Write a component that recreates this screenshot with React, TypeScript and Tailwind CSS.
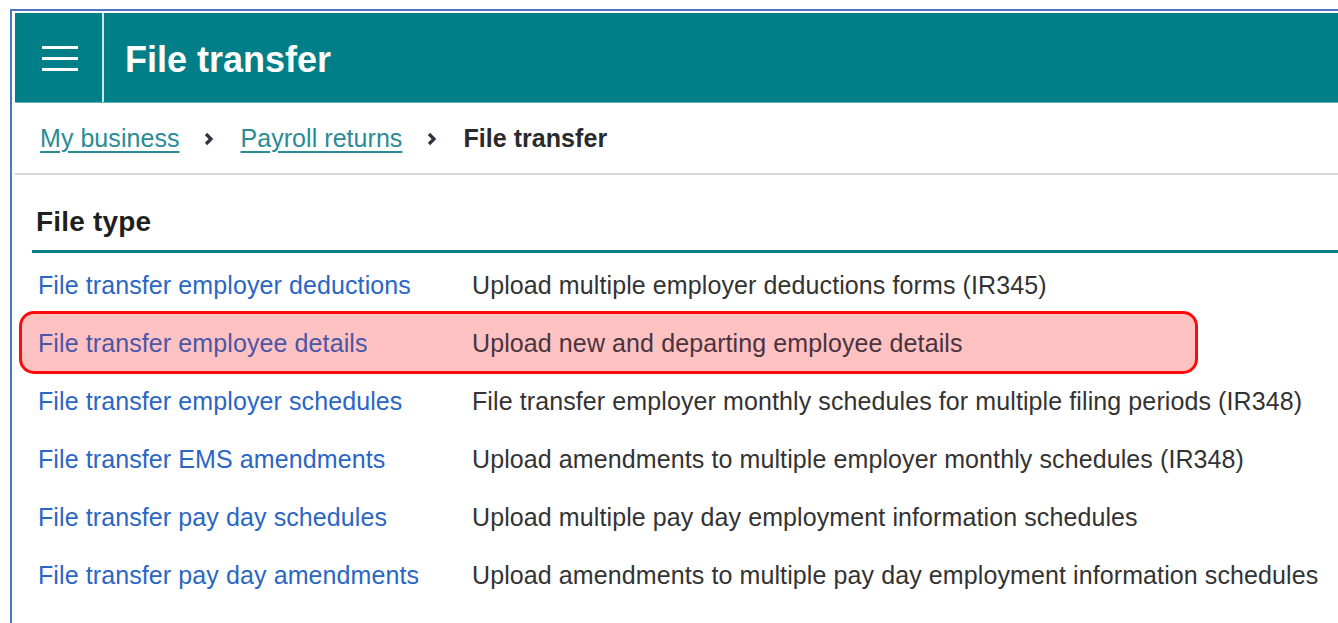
import React from "react";

const rows: { link: string; desc: string; active?: boolean }[] = [
  { link: "File transfer employer deductions", desc: "Upload multiple employer deductions forms (IR345)" },
  { link: "File transfer employee details", desc: "Upload new and departing employee details", active: true },
  { link: "File transfer employer schedules", desc: "File transfer employer monthly schedules for multiple filing periods (IR348)" },
  { link: "File transfer EMS amendments", desc: "Upload amendments to multiple employer monthly schedules (IR348)" },
  { link: "File transfer pay day schedules", desc: "Upload multiple pay day employment information schedules" },
  { link: "File transfer pay day amendments", desc: "Upload amendments to multiple pay day employment information schedules" },
];

function Chevron() {
  return (
    <svg width="12" height="16" viewBox="0 0 12 16" className="shrink-0">
      <path d="M3 3 L8 8 L3 13" fill="none" stroke="#2d3440" strokeWidth="3.2" strokeLinecap="butt" />
    </svg>
  );
}

export default function App() {
  return (
    <div className="min-h-[623px] w-[1338px] overflow-hidden bg-white pl-[10px] pt-[9px] font-['Liberation_Sans',Arial,sans-serif]">
      <div className="min-h-[614px] border-l-2 border-t-2 border-[#4a74c9] pl-[3px] pt-[2px]">
        {/* Top bar */}
        <header className="flex h-[90px] border-b border-[#5fb3b8] bg-[#007f88]">
          <div className="flex w-[89px] shrink-0 flex-col items-center justify-center gap-[8px] border-r-2 border-[#cfe6e7] pl-[2px] pt-[2px]">
            <span className="block h-[3px] w-[36px] bg-white" />
            <span className="block h-[3px] w-[36px] bg-white" />
            <span className="block h-[3px] w-[36px] bg-white" />
          </div>
          <h1 className="flex items-center pl-[21px] pt-[4px] text-[36px] font-bold text-white">File transfer</h1>
        </header>

        {/* Breadcrumb */}
        <nav className="flex h-[72px] items-center border-b-2 border-[#d6d6d6] pl-[25px] pt-[1px] text-[25px] tracking-[0.05px]">
          <a className="text-[#2a8b95] underline decoration-[1.5px] underline-offset-[4px]">My business</a>
          <span className="ml-[23px] mr-[26px] flex items-center pt-[1px]"><Chevron /></span>
          <a className="text-[#2a8b95] underline decoration-[1.5px] underline-offset-[4px]">Payroll returns</a>
          <span className="ml-[24px] mr-[25px] flex items-center pt-[1px]"><Chevron /></span>
          <span className="font-bold text-[#2a2a2a]">File transfer</span>
        </nav>

        {/* File type list */}
        <section className="pl-[17px] pt-[29px]">
          <h2 className="pl-[4px] text-[28px] font-bold leading-[36px] tracking-[0.2px] text-[#1f1f1f]">File type</h2>
          <div className="mt-[10px] h-[3px] bg-[#0b7f86]" />
          <div className="pt-[4px]">
            {rows.map((r) => (
              <div key={r.link} className="relative flex h-[58px] items-center pl-[6px] text-[25px] tracking-[0.1px]">
                {r.active && (
                  <span className="absolute left-[-13px] top-[-4px] h-[63px] w-[1179px] rounded-[15px] border-[3px] border-[#ff0a0a] bg-[#ffc2c2]" />
                )}
                <span className={`relative w-[434px] shrink-0 ${r.active ? "text-[#4a56a6]" : "text-[#2a66c4]"}`}>{r.link}</span>
                <span className={`relative whitespace-nowrap ${r.active ? "text-[#4a3340]" : "text-[#333333]"}`}>{r.desc}</span>
              </div>
            ))}
          </div>
        </section>
      </div>
    </div>
  );
}
